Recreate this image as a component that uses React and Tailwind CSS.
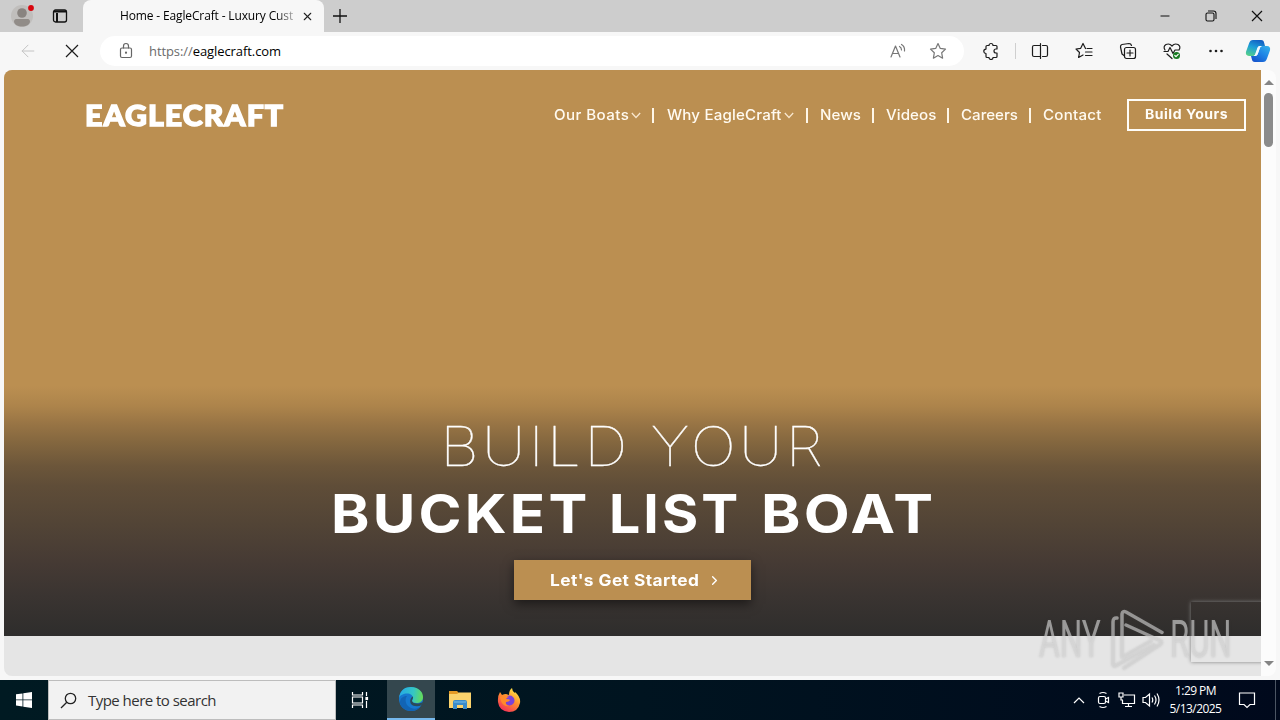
import React from "react";
import { ChevronRight, X, ArrowLeft, Minus } from "lucide-react";

const ui = "font-['Open_Sans','Noto_Sans',sans-serif]";
const site = "font-['Inter',sans-serif]";

function UserIcon() {
  return (
    <svg width="26" height="26" viewBox="0 0 26 26">
      <circle cx="12" cy="13" r="11" fill="#c0bebc" />
      <circle cx="12" cy="10" r="4.800" fill="#898480" />
      <path d="M4 18.500c0-2 1.500-2.500 3-2.500h10c1.500 0 3 .5 3 2.500 0 3-4 5-8 5s-8-2-8-5z" fill="#918c88" />
      <circle cx="21" cy="5" r="2.900" fill="#d8050d" />
    </svg>
  );
}

function TabsIcon() {
  return (
    <svg width="16" height="16" viewBox="0 0 16 16" fill="none" stroke="#111" strokeWidth="1.300">
      <rect x="1.500" y="2" width="13" height="12" rx="2" />
      <path d="M2 3.500h12M5 5v9" strokeWidth="2" />
    </svg>
  );
}

function Line({ color = "#1c1c1c", children }) {
  return (
    <svg width="18" height="18" viewBox="0 0 18 18" fill="none" stroke={color} strokeWidth="1.200" strokeLinecap="round" strokeLinejoin="round" className="shrink-0">
      {children}
    </svg>
  );
}

function Copilot() {
  return (
    <svg width="26" height="26" viewBox="0 0 26 26" className="shrink-0">
      <defs>
        <linearGradient id="cpa" x1="0.600" y1="0" x2="0.200" y2="1">
          <stop offset="0" stopColor="#1361c4" />
          <stop offset="0.450" stopColor="#1d9ed8" />
          <stop offset="1" stopColor="#55d08a" />
        </linearGradient>
        <linearGradient id="cpb" x1="1" y1="0" x2="0.200" y2="1">
          <stop offset="0" stopColor="#36b4ea" />
          <stop offset="0.500" stopColor="#1f86e6" />
          <stop offset="1" stopColor="#1553cc" />
        </linearGradient>
      </defs>
      <path d="M8 2h8c2.200 0 2.800 1.200 3.200 3l.8 3h-4c-2.200 0-3 1-3.600 3l-1.600 4.500c-.6 2-1.600 2.500-3.600 2.500H4c-2.500 0-3.600-2-3-4.200L4 5.500C4.800 3 6 2 8 2z" fill="url(#cpa)" />
      <path d="M18 24h-8c-2.200 0-2.800-1.200-3.200-3L6 18h3.500c2.200 0 3-1 3.600-3l1.600-4.500C15.300 8.500 16.300 8 18.300 8H22c2.500 0 3.600 2 3 4.200l-3 8.300c-.8 2.500-2 3.500-4 3.500z" fill="url(#cpb)" />
      <path d="M14.500 8h2.500c-1.300.4-1.900 1.200-2.300 2.500L13.100 15c-.6 2-1.400 3-3.100 3H8.500c1.100-.4 1.500-1.200 1.900-2.500l1.600-4.500c.5-1.800 1-2.800 2.500-3z" fill="#f3faff" />
    </svg>
  );
}

function TitleBar() {
  return (
    <div className="flex h-8 items-stretch bg-[#cdcdcd]">
      <div className="flex w-[83px] items-center pl-[10px]">
        <UserIcon />
        <div className="ml-[16px]"><TabsIcon /></div>
      </div>
      <div className="flex w-[241px] items-center rounded-t-lg bg-[#f7f7f7] pl-[37px]">
        <div className="w-[173px] whitespace-nowrap text-[12px] tracking-[-0.140px] text-black [mask-image:linear-gradient(to_right,black_90%,rgba(0,0,0,0.3))]">
          Home - EagleCraft - Luxury Cust
        </div>
        <X size={13} strokeWidth={2} className="ml-[8px] text-[#222]" />
      </div>
      <div className="flex w-[32px] items-center justify-center">
        <svg width="14" height="14" viewBox="0 0 14 14" stroke="#111" strokeWidth="1.300"><path d="M7 0v14M0 7h14" /></svg>
      </div>
      <div className="ml-auto flex items-center pr-[17px]">
        <Minus size={14} strokeWidth={1.6} />
        <svg width="12" height="12" viewBox="0 0 12 12" fill="none" stroke="#111" strokeWidth="1.100" className="ml-[33px]">
          <rect x="1" y="3" width="8" height="8" rx="1.500" />
          <path d="M3 1h5.500c1.500 0 2.500 1 2.500 2.500V9" />
        </svg>
        <svg width="12" height="12" viewBox="0 0 12 12" stroke="#111" strokeWidth="1.200" className="ml-[34px]">
          <path d="M1 1l10 10M11 1L1 11" />
        </svg>
      </div>
    </div>
  );
}

function Toolbar() {
  return (
    <div className="flex h-[38px] items-center bg-[#f7f7f7]">
      <ArrowLeft size={20} strokeWidth={1.2} className="ml-[18px] text-[#c4c4c4]" />
      <svg width="14" height="14" viewBox="0 0 14 14" stroke="#1c1c1c" strokeWidth="1.200" className="ml-[27px]">
        <path d="M1 1l12 12M13 1L1 13" />
      </svg>
      <div className="ml-[21px] flex h-[30px] w-[864px] items-center rounded-full bg-white pl-[17px] pr-[17px]">
        <Line color="#666">
          <rect x="3.500" y="6" width="11" height="9.500" rx="1.500" />
          <path d="M6.500 6V4a2.500 2.500 0 0 1 5 0v2" />
          <circle cx="9" cy="10.700" r="0.500" fill="#666" />
        </Line>
        <div className="ml-[14px] pt-px whitespace-nowrap text-[13px] tracking-[-0.080px] text-black"><span className="text-[#6b6b6b]">https://</span>eaglecraft.com</div>
        <div className="ml-auto flex items-center gap-[22px]">
          <Line color="#777">
            <path d="M2 15L6.500 4 11 15M3.500 11.500h6M10.500 4.500q2 1 2 3.500M12.500 2.500q3.500 2 3 6.500" />
          </Line>
          <Line color="#777">
            <path d="M9 1.500l2.300 4.900 5.200.7-3.800 3.700.9 5.400L9 13.600l-4.600 2.600.9-5.400L1.500 7.100l5.200-.7z" />
          </Line>
        </div>
      </div>
      <div className="ml-[18px] flex items-center">
        <Line>
          <path d="M5 3.500h2a2 2 0 0 1 4 0h3q1 0 1 1V7h-1a2 2 0 0 0 0 4h1v3.500q0 1-1 1h-3a2 2 0 0 1-4 0H5q-1 0-1-1v-3a2.200 2.200 0 0 1 0-4.400V4.500q0-1 1-1z" />
        </Line>
        <div className="ml-[15px] h-4 w-px bg-[#cfcfcf]" />
        <div className="ml-[15px]"><Line><path d="M6.500 3.500H3Q1.500 3.500 1.500 5v8q0 1.500 1.500 1.500h6.500M6.500 3.500h3M11.500 3.500H15q1.500 0 1.500 1.500v8q0 1.500-1.500 1.500h-3.500M9.500 1.500v15" /></Line></div>
        <div className="ml-[26px]"><Line><path d="M10.500 6.500L8 1.500 5.700 6.300 1 7l3.500 3.500-.9 5L8 13M12 6.500h5M10.500 10H17M10.500 13.500H17" /></Line></div>
        <div className="ml-[26px]"><Line><path d="M5 13.500L3 12 1.500 5Q1.300 3 3 2.500L10 1.500q2 0 2.500 2" /><rect x="5.500" y="5.500" width="11" height="11" rx="2" /><path d="M11 8v6M8 11h6" /></Line></div>
        <div className="ml-[26px]"><Line><path d="M2 8Q-.2 4.500 3 2.500q3.500-1.500 6 1.500 2.500-3 6-1.500 3.200 2 1 5.500M1 9.500h4l2-4 3 6 2-3.500h4M4 12l5 4.500" /><circle cx="13.500" cy="13.500" r="3.500" fill="#187b22" stroke="none" /><path d="M11.800 13.500l1.200 1.200 2.200-2.400" stroke="#fff" /></Line></div>
        <svg width="14" height="4" viewBox="0 0 14 4" fill="#1c1c1c" className="ml-[28px]">
          <circle cx="1.500" cy="2" r="1.300" /><circle cx="7" cy="2" r="1.300" /><circle cx="12.500" cy="2" r="1.300" />
        </svg>
        <div className="ml-[22px]"><Copilot /></div>
      </div>
    </div>
  );
}

function NavLink({ label, className, menu }) {
  return (
    <div className={"flex items-center pb-[2px] whitespace-nowrap text-[14px] font-medium text-[#fffaf0] " + className}>
      <span className="origin-left scale-x-[1.080]">{label}</span>
      {menu && (
        <svg width="10" height="7" viewBox="0 0 10 7" fill="none" stroke="#f8e6cc" strokeWidth="1.300" className="mt-[2px] ml-auto">
          <path d="M0.800 1l4.200 4.500L9.200 1" />
        </svg>
      )}
    </div>
  );
}

function Divider() {
  return <div className="h-[15px] w-[2px] bg-[#fff7e8]" />;
}

function SiteHeader() {
  return (
    <header className="flex h-[90px] items-center pl-[81px]">
      <div className="w-[468px]">
        <div className="w-[182px] origin-left scale-x-[1.060] whitespace-nowrap font-['Lato',sans-serif] text-[28.5px] leading-none font-black tracking-[1px] text-white [-webkit-text-stroke:1.400px_white]">
          EAGLECRAFT
        </div>
      </div>
      <nav className="flex items-center">
        <NavLink label="Our Boats" menu className="mr-[11px] ml-[1px] w-[87px] tracking-[0.380px]" />
        <Divider />
        <NavLink label="Why EagleCraft" menu className="mr-[12px] ml-[13px] w-[127px] tracking-[0.150px]" />
        <Divider />
        <NavLink label="News" className="ml-[12px] w-[52px] tracking-[0.050px]" />
        <Divider />
        <NavLink label="Videos" className="ml-[12px] w-[61px] tracking-[0.050px]" />
        <Divider />
        <NavLink label="Careers" className="ml-[12px] w-[68px] tracking-[0px]" />
        <Divider />
        <NavLink label="Contact" className="ml-[12px] w-[84px] tracking-[0.200px]" />
        <button className="flex h-8 w-[119px] items-center justify-center border-2 border-[#fffdf8] text-[13px] font-bold tracking-[0.490px] whitespace-nowrap text-[#fffdf8]">
          <span className="scale-x-[1.080]">Build Yours</span>
        </button>
      </nav>
    </header>
  );
}

function Hero() {
  return (
    <section className="flex h-[566px] flex-col bg-[linear-gradient(to_bottom,#bb8f51_0px,#bb8f51_316px,#ad844b_336px,#997545_353px,#84673f_372px,#6c563a_396px,#5f4d38_416px,#524436_454px,#453a34_494px,#3a3431_526px,#2e2d2c_566px)]">
      <SiteHeader />
      <div className="mt-[253px] flex flex-col items-center text-white">
        <h1 className="flex flex-col items-center text-[54px] leading-[67px] tracking-[3px] whitespace-nowrap">
          <span className="scale-x-[1.115] pl-[1px] font-[100] [-webkit-text-stroke:0.300px_white]">BUILD YOUR</span>
          <span className="flex w-[607px] pl-[2px] font-bold">
            <span className="w-[278px]"><span className="inline-block origin-left scale-x-[1.077]">BUCKET</span></span>
            <span className="w-[152px]"><span className="inline-block origin-left scale-x-[1.025]">LIST</span></span>
            <span className="w-[175px]"><span className="inline-block origin-left scale-x-[1.105]">BOAT</span></span>
          </span>
        </h1>
        <button className="mt-[13px] flex h-[40px] w-[237px] items-center bg-[#bb8f51] pl-[36px] text-[16px] font-bold tracking-[0.400px] whitespace-nowrap shadow-[0_4px_10px_rgba(0,0,0,0.5)]">
          <span className="w-[157px] text-left"><span className="inline-block origin-left scale-x-[1.080]">Let's Get Started</span></span>
          <ChevronRight size={15} strokeWidth={2.2} />
        </button>
      </div>
    </section>
  );
}

function Watermark() {
  return (
    <div className="absolute top-[538px] left-[1035px] flex items-center font-['Roboto',sans-serif] text-[51px] leading-[64px] font-normal text-[#dcdcdc]/60 [text-shadow:0_0_3px_rgba(90,90,90,0.250)]">
      <span className="w-[71px] origin-left scale-x-[0.620] whitespace-nowrap">ANY</span>
      <svg width="56" height="62" viewBox="0 0 56 62" fill="none" stroke="#d6d6d6" strokeOpacity="0.600" strokeWidth="3.500" strokeLinejoin="round" strokeLinecap="round" className="drop-shadow-[0_0_1px_rgba(90,90,90,0.3)]">
        <path d="M7 9Q3 8.500 3 13v42q.5 3 3 1.500L44 36M12 48V5q.5-3.500 4-2l36 20.500M13 48l28-16M16 16l34 15.500q3 2 0 4L14 59" />
      </svg>
      <span className="ml-[4px] origin-left scale-x-[0.610] whitespace-nowrap">RUN</span>
    </div>
  );
}

function Page() {
  return (
    <div className="flex h-[610px] bg-[#f7f7f7] pl-1 pr-1">
      <main className={"relative h-[606px] w-[1257px] overflow-hidden rounded-l-lg bg-[#e5e5e5] " + site}>
        <Hero />
        <div className="absolute top-[532px] left-[1187px] h-[60px] w-[80px] shadow-[0_0_4px_rgba(128,128,128,1)]" />
        <Watermark />
      </main>
      <div className="flex h-[606px] w-[15px] flex-col items-center rounded-r-lg bg-[#fcfcfc] py-[10px]">
        <div className="h-0 w-0 border-x-[5px] border-b-[5px] border-x-transparent border-b-[#858585]" />
        <div className="mt-[8px] h-[54px] w-[9px] rounded-full bg-[#8b8b8b]" />
        <div className="mt-auto h-0 w-0 border-x-[5px] border-t-[5px] border-x-transparent border-t-[#858585]" />
      </div>
    </div>
  );
}

function EdgeIcon() {
  return (
    <svg width="26" height="26" viewBox="0 0 26 26">
      <defs>
        <linearGradient id="eg" x1="0" y1="0.300" x2="1" y2="0.400">
          <stop offset="0" stopColor="#24a9e8" />
          <stop offset="0.600" stopColor="#35c6c4" />
          <stop offset="1" stopColor="#65dc58" />
        </linearGradient>
      </defs>
      <circle cx="13" cy="13" r="12" fill="#1678cf" />
      <path d="M1 12C2 4 7 1 13 1c7 0 12 4.500 12 10 0 4-3 6-6.500 6-3 0-4.500-1-4.500-2s1-1 1-3c0-2.500-2.500-4.500-6-4.500S2 9 1 12z" fill="url(#eg)" />
      <path d="M9 10c-3 4-1 10 4 12 4 1.500 7 .5 10-2-2 3-5.500 5-10 5C7 25 2.500 21 2 17c0-5 3-7 7-7z" fill="#1264b5" />
      <path d="M15 10.500c.5 2-1 2.500-1 4 0 1.800 2 3 5 3 2 0 3.500-.5 6-1.500q-.500 2-1.500 3.200-3 1.300-6.500.8c-4-.5-5.500-3.500-4.500-6.500.500-1.500 1-2.500 2.500-3z" fill="#2c4a58" />
    </svg>
  );
}

function FolderIcon() {
  return (
    <svg width="24" height="24" viewBox="0 0 24 24">
      <path d="M1 3h8l2 2h12v15H1z" fill="#e59b25" />
      <path d="M1 6h8l2-1.500h12V20H1z" fill="#fbd36c" />
      <path d="M5 21v-7q0-2 2-2h10q2 0 2 2v7h-4v-4H9v4z" fill="#398bc9" />
      <path d="M6 14h12" stroke="#75bcea" />
    </svg>
  );
}

function FirefoxIcon() {
  return (
    <svg width="26" height="26" viewBox="0 0 26 26">
      <defs>
        <linearGradient id="ff" x1="0.800" y1="0" x2="0.200" y2="1">
          <stop offset="0" stopColor="#fff04a" />
          <stop offset="0.450" stopColor="#ff912d" />
          <stop offset="1" stopColor="#f3285c" />
        </linearGradient>
      </defs>
      <path d="M4 5l2 3q2-1 4-1l3 1q0-5 3-7 0 3 3 5V5q6 5 5 11-2 9-11 9Q3 24 2 15q-.5-6 2-10z" fill="url(#ff)" />
      <circle cx="13.500" cy="13.500" r="5" fill="#7a43d8" />
      <path d="M4 10q5-3 9 0-2 0-3 2 3 0 4 1-1 2-4 2-1 3 3 4-6 1-8-5z" fill="#ff8a2b" />
    </svg>
  );
}

function Taskbar() {
  return (
    <div className="flex h-10 items-stretch bg-[linear-gradient(to_right,#001a22,#001420_50%,#00091c)] text-white">
      <div className="flex w-12 items-center justify-center">
        <svg width="16" height="16" viewBox="0 0 16 16" fill="#fff">
          <path d="M0 2.300l6.500-.9v6.100H0zM7.300 1.300L16 0v7.500H7.300zM0 8.300h6.500v6.200L0 13.600zM7.300 8.300H16V16l-8.700-1.300z" />
        </svg>
      </div>
      <div className="flex w-[288px] items-center border border-[#bdbdbd] bg-[#f2f2f2] pl-[11px]">
        <svg width="17" height="17" viewBox="0 0 17 17" fill="none" stroke="#222" strokeWidth="1.300">
          <circle cx="10.500" cy="6.500" r="5.200" />
          <path d="M6.800 10.200L1 16" />
        </svg>
        <span className="ml-[11px] whitespace-nowrap text-[15px] tracking-[-0.530px] text-[#333]">Type here to search</span>
      </div>
      <div className="flex w-[51px] items-center pl-[15px]">
        <svg width="18" height="18" viewBox="0 0 18 18" fill="none" stroke="#fff" strokeWidth="1.200">
          <path d="M1.500 1v3h10V1M1.500 17v-3h10v3M1.500 6h10v6h-10zM15.500 1v4M15.500 10v7" />
          <rect x="15" y="6.500" width="1.500" height="2" fill="#fff" />
        </svg>
      </div>
      <div className="flex w-12 items-center justify-center border-b-2 border-[#76b9ed] bg-[#34474e]"><EdgeIcon /></div>
      <div className="flex w-[49px] items-center justify-center"><FolderIcon /></div>
      <div className="flex w-[49px] items-center justify-center"><FirefoxIcon /></div>
      <div className="ml-auto flex items-center">
        <svg width="12" height="8" viewBox="0 0 12 8" fill="none" stroke="#fff" strokeWidth="1.200"><path d="M1 7l5-5 5 5" /></svg>
        <svg width="14" height="18" viewBox="0 0 14 18" fill="none" stroke="#fff" strokeWidth="1.200" className="ml-[12px]">
          <rect x="1.500" y="5.500" width="7" height="7" rx="1.500" />
          <path d="M8.500 8l3-1.500v5l-3-1.500M2.500 2.500q3.500-2 7 0M2.500 15.500q3.500 2 7 0" />
        </svg>
        <svg width="18" height="18" viewBox="0 0 18 18" fill="none" stroke="#fff" strokeWidth="1.200" className="ml-[7px]">
          <path d="M6 4h10.500v8.500h-12V9M10.500 12.500V15M7 15.500h7M1 2h4v4H1zM3 6v3h2" />
        </svg>
        <svg width="18" height="18" viewBox="0 0 18 18" fill="none" stroke="#fff" strokeWidth="1.200" className="ml-[6px]">
          <path d="M1 6.500h2.500L7.500 3v12l-4-3.500H1zM10 6.500q1.500 2.500 0 5M12.500 4.500q3 4.500 0 9M15 2.500q4 6.500 0 13" />
        </svg>
        <div className="ml-[5px] w-[61px] text-center text-[12px] leading-[18px] tracking-[-0.550px] whitespace-nowrap">
          <div>1:29 PM</div>
          <div>5/13/2025</div>
        </div>
        <svg width="18" height="18" viewBox="0 0 18 18" fill="none" stroke="#fff" strokeWidth="1.200" className="ml-[12px]">
          <path d="M1.500 2h15v11.500H12l-3 3-3-3H1.500z" />
        </svg>
        <div className="ml-[19px] h-10 w-px bg-[#4b5563]" />
        <div className="w-[4px]" />
      </div>
    </div>
  );
}

export default function App() {
  return (
    <div className={"flex h-[720px] w-[1280px] flex-col overflow-hidden bg-[#f7f7f7] " + ui}>
      <TitleBar />
      <Toolbar />
      <Page />
      <Taskbar />
    </div>
  );
}
